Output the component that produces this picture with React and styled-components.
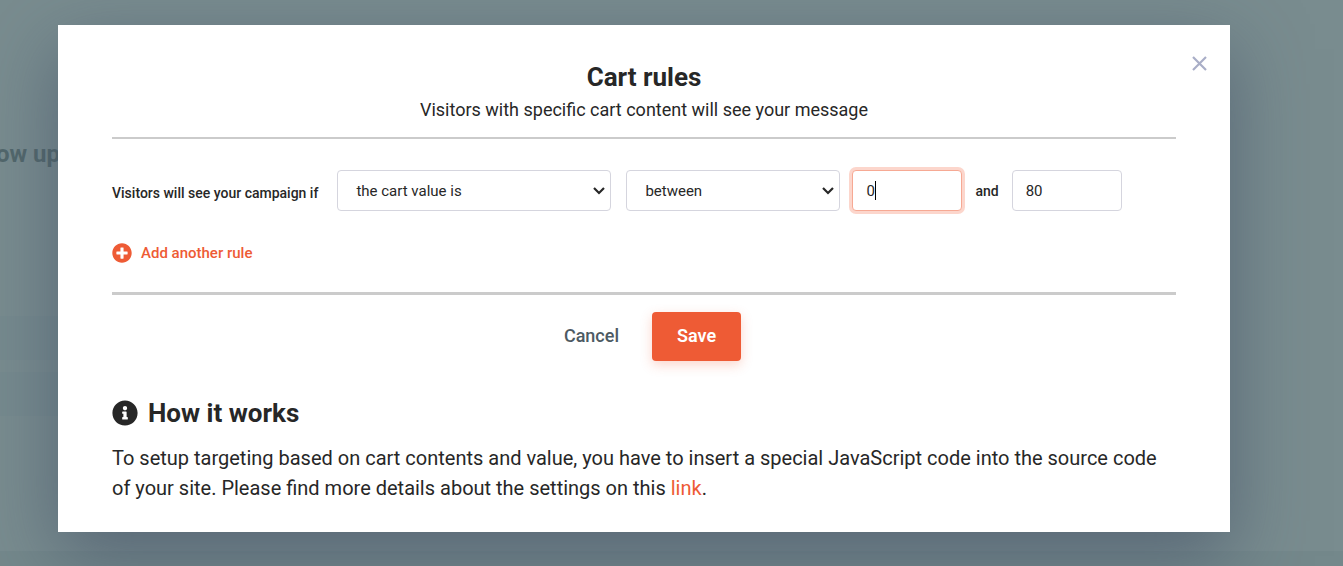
import React, { useEffect, useRef, useState } from "react";
import styled, { ThemeProvider, createGlobalStyle } from "styled-components";
import { FaInfoCircle, FaPlusCircle } from "react-icons/fa";

const theme = {
  colors: {
    text: "#272727",
    grey: "#4d5a63",
    orange: "#ee5b35",
    line: "#cbcbcb",
    border: "#d5d5de",
    backdrop: "#798c8f",
  },
};

const GlobalStyle = createGlobalStyle`
  *, *::before, *::after {
    box-sizing: border-box;
  }

  body {
    margin: 0;
    font-family: Roboto, "Liberation Sans", sans-serif;
    color: ${theme.colors.text};
    background-color: ${theme.colors.backdrop};
  }

  button, input, select {
    font: inherit;
    color: inherit;
  }
`;

const Page = styled.div`
  position: relative;
  min-height: 100vh;
  overflow: hidden;
`;

// Dimmed page that stays behind the dialog
const Behind = styled.div`
  position: absolute;
  inset: 0;
  display: flex;
  flex-direction: column;
  padding-top: 139px;
`;

const BehindTitle = styled.div`
  display: flex;
  justify-content: flex-end;
  width: 60px;
  height: 66px;
  font-size: 24px;
  line-height: 30px;
  font-weight: 700;
  white-space: nowrap;
  color: #52676b;
`;

const Band = styled.div`
  width: 58px;
  height: ${(props) => props.$height}px;
  background-color: ${(props) => (props.$dark ? "#768a8e" : "transparent")};
`;

const BehindFooter = styled.div`
  margin-top: auto;
  height: 15px;
  background-color: #74888b;
`;

const Dialog = styled.section`
  position: relative;
  margin: 25px 113px 34px 58px;
  padding: 36px 54px 29px;
  background-color: white;
  box-shadow: 0 24px 70px rgba(64, 76, 100, 0.6);
`;

const CloseButton = styled.button`
  position: absolute;
  top: 26px;
  right: 18px;
  display: flex;
  padding: 4px;
  border: 0;
  background: none;
  cursor: pointer;
`;

const Header = styled.header`
  padding-bottom: 15px;
  border-bottom: 2px solid ${(props) => props.theme.colors.line};
  text-align: center;
`;

const Title = styled.h2`
  margin: 0;
  font-size: 26px;
  line-height: 32px;
  font-weight: 700;
`;

const Subtitle = styled.p`
  margin: 5px 0 0;
  font-size: 18px;
  line-height: 24px;
`;

const Rule = styled.div`
  display: flex;
  align-items: center;
  margin-top: 31px;
`;

const RuleLabel = styled.span`
  flex: none;
  margin-right: 19px;
  padding-top: 4px;
  font-size: 14px;
  line-height: 20px;
  font-weight: 500;
`;

const SelectBox = styled.div`
  position: relative;
  width: ${(props) => props.$width}px;
  margin-right: ${(props) => props.$gap}px;

  svg {
    position: absolute;
    top: 16px;
    right: 5px;
    pointer-events: none;
  }
`;

const Select = styled.select`
  appearance: none;
  display: block;
  width: 100%;
  height: 41px;
  padding: 0 18px;
  border: 1px solid ${(props) => props.theme.colors.border};
  border-radius: 4px;
  background-color: white;
  font-size: 15px;
`;

const InputBox = styled.div`
  position: relative;
`;

const NumberInput = styled.input`
  display: block;
  width: 110px;
  height: 41px;
  padding: 0 13px;
  border: 1px solid ${(props) => props.theme.colors.border};
  border-radius: 4px;
  background-color: white;
  font-size: 15px;
  caret-color: transparent;

  &:focus {
    outline: none;
    border-color: #f6a994;
    box-shadow: 0 0 0 3px #fcd6cc;
  }
`;

const Caret = styled.span`
  position: absolute;
  top: 11px;
  width: 1px;
  height: 19px;
  background-color: black;
  font-size: 15px;
  pointer-events: none;
`;

const And = styled.span`
  margin: 0 13px;
  font-size: 14px;
  line-height: 20px;
  font-weight: 500;
`;

const AddButton = styled.button`
  display: flex;
  align-items: center;
  gap: 9px;
  margin-top: 31px;
  padding: 0;
  border: 0;
  background: none;
  color: ${(props) => props.theme.colors.orange};
  font-size: 15px;
  line-height: 22px;
  font-weight: 500;
  cursor: pointer;
`;

const Actions = styled.div`
  display: flex;
  justify-content: center;
  margin-top: 28px;
  padding: 17px 8px 0 0;
  border-top: 3px solid ${(props) => props.theme.colors.line};
`;

const Button = styled.button`
  height: 49px;
  padding: 0 25px 2px;
  border: 0;
  border-radius: 4px;
  background-color: transparent;
  color: ${(props) => props.theme.colors.grey};
  font-size: 18px;
  line-height: 24px;
  font-weight: ${(props) => (props.$primary ? 600 : 500)};
  cursor: pointer;
`;

const SaveButton = styled(Button)`
  margin-left: 8px;
  background-color: ${(props) => props.theme.colors.orange};
  color: white;
  box-shadow: 0 4px 12px rgba(238, 91, 53, 0.25);
`;

const HelpTitle = styled.h3`
  display: flex;
  align-items: center;
  gap: 10px;
  margin: 36px 0 14px;
  font-size: 26px;
  line-height: 32px;
  font-weight: 700;
`;

const HelpText = styled.p`
  margin: 0;
  font-size: 20px;
  line-height: 30px;

  a {
    color: ${(props) => props.theme.colors.orange};
    text-decoration: none;
  }
`;

const SelectField = ({ width, gap, label, options }) => (
  <SelectBox $width={width} $gap={gap}>
    <Select aria-label={label}>
      {options.map((option) => (
        <option key={option}>{option}</option>
      ))}
    </Select>
    <svg width="14" height="10" viewBox="0 0 14 10" fill="none">
      <path d="M2 2L7 7L12 2" stroke="#272727" strokeWidth="2.2" />
    </svg>
  </SelectBox>
);

const NumberField = ({ label, initial, focused }) => {
  const [value, setValue] = useState(initial);
  const [active, setActive] = useState(false);
  const ref = useRef(null);

  useEffect(() => {
    if (focused) ref.current.focus();
  }, [focused]);

  return (
    <InputBox>
      <NumberInput
        ref={ref}
        type="text"
        aria-label={label}
        value={value}
        onChange={(e) => setValue(e.target.value)}
        onFocus={() => setActive(true)}
        onBlur={() => setActive(false)}
      />
      {active && (
        <Caret style={{ left: `calc(14px + ${value.length}ch)` }} />
      )}
    </InputBox>
  );
};

const App = () => {
  return (
    <ThemeProvider theme={theme}>
      <GlobalStyle />
      <Page>
        <Behind aria-hidden="true">
          <BehindTitle>ow up</BehindTitle>
          <Band $height={111} />
          <Band $height={44} $dark />
          <Band $height={12} />
          <Band $height={44} $dark />
          <BehindFooter />
        </Behind>

        <Dialog role="dialog" aria-labelledby="cart-rules-title">
          <CloseButton type="button" aria-label="Close">
            <svg width="17" height="17" viewBox="0 0 17 17" fill="none">
              <path
                d="M2 2L15 15M15 2L2 15"
                stroke="#a9aec7"
                strokeWidth="2.2"
              />
            </svg>
          </CloseButton>

          <Header>
            <Title id="cart-rules-title">Cart rules</Title>
            <Subtitle>
              Visitors with specific cart content will see your message
            </Subtitle>
          </Header>

          <Rule>
            <RuleLabel>Visitors will see your campaign if</RuleLabel>
            <SelectField
              width={274}
              gap={15}
              label="Cart property"
              options={["the cart value is"]}
            />
            <SelectField
              width={214}
              gap={12}
              label="Condition"
              options={["between"]}
            />
            <NumberField label="From" initial="0" focused />
            <And>and</And>
            <NumberField label="To" initial="80" />
          </Rule>

          <AddButton type="button">
            <FaPlusCircle size={20} />
            Add another rule
          </AddButton>

          <Actions>
            <Button type="button">Cancel</Button>
            <SaveButton type="button" $primary>
              Save
            </SaveButton>
          </Actions>

          <HelpTitle>
            <FaInfoCircle size={26} />
            How it works
          </HelpTitle>
          <HelpText>
            To setup targeting based on cart contents and value, you have to
            insert a special JavaScript code into the source code of your site.
            Please find more details about the settings on this{" "}
            <a href="#settings">link</a>.
          </HelpText>
        </Dialog>
      </Page>
    </ThemeProvider>
  );
};

export default App;
